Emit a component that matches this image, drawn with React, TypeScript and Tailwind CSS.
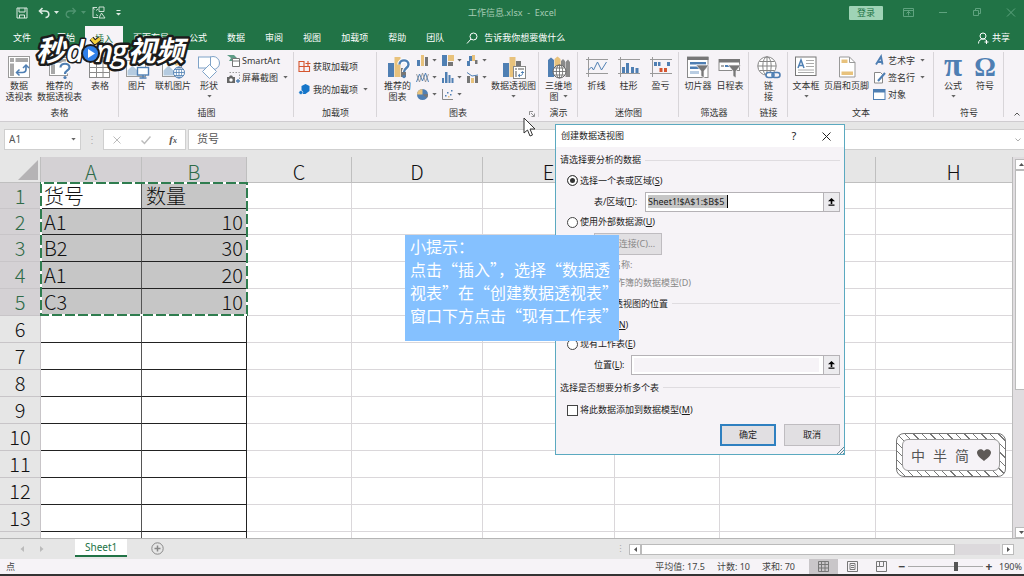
import type { ReactNode } from 'react';

const BLUE = '#4f7fb3';
const SAND = '#e8c27c';
const GRAY = '#767676';

const tabs = ['文件', '开始', '插入', '页面布局', '公式', '数据', '审阅', '视图', '加载项', '帮助', '团队'];

const columns = ['A', 'B', 'C', 'D', 'E', 'F', 'G', 'H'];

const rows: [string, string][] = [
  ['货号', '数量'],
  ['A1', '10'],
  ['B2', '30'],
  ['A1', '20'],
  ['C3', '10'],
  ['', ''],
  ['', ''],
  ['', ''],
  ['', ''],
  ['', ''],
  ['', ''],
  ['', ''],
  ['', ''],
  ['', ''],
];

function Icon({ children }: { children: ReactNode }) {
  return (
    <svg viewBox="0 0 24 24" className="size-6 shrink-0 overflow-visible" fill="none" aria-hidden="true">
      {children}
    </svg>
  );
}

function SmallIcon({ children }: { children: ReactNode }) {
  return (
    <svg viewBox="0 0 13 13" className="size-[13px] shrink-0" fill="none" aria-hidden="true">
      {children}
    </svg>
  );
}

function Caret() {
  return (
    <svg viewBox="0 0 5 3" className="h-[3px] w-[5px] shrink-0" aria-hidden="true">
      <path d="M0.3 0h4.4L2.5 2.6z" fill="#666" />
    </svg>
  );
}

function PivotIcon() {
  return (
    <Icon>
      <rect x="1.5" y="0.5" width="21" height="21" fill="#fff" stroke="#9a9a9a" />
      <path d="M3 2h4v4H3zM8.500 2h12.500v4H8.500zM3 7.500h4V20H3z" fill="#a8a8a8" />
      <path d="M10 16.500h5.500c2.500 0 3.500-1.500 3.500-3.500V10" stroke={BLUE} strokeWidth="1.700" />
      <path d="M12.500 13.500l-3 3 3 3M16 12l3-3 3 3" stroke={BLUE} strokeWidth="1.500" />
    </Icon>
  );
}

function PivotHelpIcon() {
  return (
    <Icon>
      <rect x="1.500" y="1.500" width="18" height="18" fill="#fff" stroke="#9a9a9a" />
      <path d="M3 3h4v4H3zM8.500 3H18v4H8.500zM3 8.500h4V18H3z" fill="#a8a8a8" />
      <path d="M12.500 11.500c0-5 9-5 9 0 0 3-4.500 3-4.500 6.500" stroke="#fff" strokeWidth="4.500" />
      <path d="M12.500 11.500c0-5 9-5 9 0 0 3-4.500 3-4.500 6.500" stroke={BLUE} strokeWidth="2.200" />
      <circle cx="17" cy="21.500" r="1.600" fill={BLUE} />
    </Icon>
  );
}

function TableIcon() {
  return (
    <Icon>
      <rect x="1.500" y="1.500" width="20" height="20" fill="#fff" stroke="#8a8a8a" />
      <path d="M1 2h21v4H1z" fill="#8a8a8a" />
      <path d="M1.500 11.500h20M1.500 16.500h20M8.500 6v15M15 6v15" stroke="#8a8a8a" />
    </Icon>
  );
}

function PictureIcon({ online = false }: { online?: boolean }) {
  return (
    <Icon>
      <rect x="1.500" y="4.500" width="19" height="16" fill="#fff" stroke="#9a9a9a" />
      <path d="M2.500 19.500v-5l5-5 5 5 2.500-2 4.500 3v4z" fill="#b5cbe0" />
      <circle cx="15.500" cy="8" r="1.700" fill={SAND} />
      {online ? (
        <>
          <circle cx="18" cy="16.500" r="5.500" fill="#fff" stroke={BLUE} />
          <path d="M12.500 16.500h11M18 11v11M14 13.500h8M14 19.500h8" stroke={BLUE} strokeWidth="0.800" />
          <ellipse cx="18" cy="16.500" rx="2.700" ry="5.500" stroke={BLUE} strokeWidth="0.800" />
        </>
      ) : (
        <>
          <rect x="12.500" y="11.500" width="11" height="7.500" fill="#fff" stroke={BLUE} strokeWidth="1.400" />
          <path d="M18 19v2.500M14.500 22h7" stroke={BLUE} strokeWidth="1.300" />
        </>
      )}
    </Icon>
  );
}

function ShapesIcon() {
  return (
    <Icon>
      <circle cx="16" cy="7" r="6.500" fill="#fff" stroke="#7fa3c8" />
      <rect x="1.500" y="1" width="12" height="11" fill="#fff" stroke="#7fa3c8" />
      <path d="M12.500 8.500l7 7-7 7-7-7z" fill="#fff" stroke="#7fa3c8" />
    </Icon>
  );
}

function ChartHelpIcon() {
  return (
    <Icon>
      <path d="M2 7h6v14H2z" fill={BLUE} />
      <path d="M8.500 1h6v20h-6z" fill={SAND} />
      <path d="M15 12h5v9h-5z" fill={GRAY} />
      <path d="M13.500 8.500c0-5.500 9-5.500 9 0 0 3.500-4.500 3.500-4.500 7.500" stroke="#fff" strokeWidth="4.500" />
      <path d="M13.500 8.500c0-5.500 9-5.500 9 0 0 3.500-4.500 3.500-4.500 7.500" stroke={BLUE} strokeWidth="2.400" />
      <circle cx="18" cy="20.500" r="1.700" fill={BLUE} />
    </Icon>
  );
}

function PivotChartIcon() {
  return (
    <Icon>
      <path d="M1 7h6v14H1z" fill={BLUE} />
      <path d="M7.500 1h6v20h-6z" fill={SAND} />
      <path d="M14 5h5v7h-5z" fill={GRAY} />
      <rect x="11.500" y="10.500" width="12" height="12" fill="#fff" stroke="#888" />
      <path d="M13 12h2v2h-2zM16 12h6v2h-6zM13 15h2v6h-2z" fill="#aaa" />
      <path d="M16.500 19.500h2c1.500 0 2-.8 2-2V16M18 18l-1.800 1.500L18 21M19 17l1.500-1.600L22 17" stroke={BLUE} />
    </Icon>
  );
}

function MapIcon() {
  return (
    <Icon>
      <path d="M1 4l3-2.500L7 4v17H1z" fill={BLUE} />
      <path d="M7.500 3l3-2.500 3 2.500v8h-6z" fill={SAND} />
      <path d="M14 5l2-2 2 2v8h-4zM18.500 6l2.500-2.500L23 6v15h-4.500z" fill="#8a8a8a" />
      <circle cx="12.500" cy="15.500" r="6.500" fill="#fff" stroke="#666" />
      <path d="M6 15.500h13M12.500 9v13M7.500 12h10M7.500 19h10" stroke="#666" strokeWidth="0.800" />
      <ellipse cx="12.500" cy="15.500" rx="3.200" ry="6.500" stroke="#666" strokeWidth="0.800" />
    </Icon>
  );
}

function Spark({ children }: { children: ReactNode }) {
  return (
    <Icon>
      <path d="M1 3.500h22M1 17.500h22M3.500 1v20" stroke="#9a9a9a" />
      {children}
    </Icon>
  );
}

function Funnel() {
  return <path d="M10 9h13l-5 6v7l-3-2v-5z" fill="#777" stroke="#f6f3f7" strokeWidth="0.700" />;
}

function SlicerIcon() {
  return (
    <Icon>
      <rect x="1.500" y="1" width="20.500" height="20.500" fill="#fff" stroke="#8a8a8a" />
      <path d="M1 1h21.500v3H1z" fill="#777" />
      <path d="M4 6h16v2.500H4z" fill={BLUE} />
      <path d="M4 10.500h16V13H4z" fill={BLUE} />
      <path d="M4 15h9v3H4z" fill="#b9cde2" />
      <Funnel />
    </Icon>
  );
}

function TimelineIcon() {
  return (
    <Icon>
      <rect x="1" y="3.500" width="20.500" height="11" fill="#fff" stroke="#8a8a8a" />
      <path d="M1 3h21v3.500H1z" fill="#777" />
      <path d="M3 9h3v2H3zM13 9h3v2h-3zM17 9h3v2h-3z" fill="#aaa" />
      <path d="M7 9h6v2H7z" fill={BLUE} />
      <Funnel />
    </Icon>
  );
}

function LinkIcon() {
  return (
    <Icon>
      <circle cx="10" cy="10" r="9.200" fill="#fff" stroke="#858585" />
      <ellipse cx="10" cy="10" rx="4.200" ry="9.200" stroke="#858585" />
      <path d="M1 10h18M10 1v18M2.500 5.500h15M2.500 14.500h15" stroke="#858585" />
      <rect x="9" y="16.500" width="8" height="5" rx="2.500" fill="#fff" stroke={BLUE} strokeWidth="1.600" />
      <rect x="15" y="16.500" width="8" height="5" rx="2.500" stroke={BLUE} strokeWidth="1.600" />
    </Icon>
  );
}

function TextBoxIcon() {
  return (
    <Icon>
      <rect x="1.500" y="1" width="20.500" height="18.500" fill="#fff" stroke="#777" />
      <path d="M4 12l3-8 3 8M5 9.500h4" stroke={BLUE} strokeWidth="1.500" />
      <path d="M12 4.500h8M12 7.500h8M12 10.500h8M4 14h16M4 16.500h16" stroke="#aaa" />
    </Icon>
  );
}

function HeaderFooterIcon() {
  return (
    <Icon>
      <path d="M4.500 1h10l5.500 5.500V21H4.500z" fill="#fff" stroke="#999" />
      <path d="M14.500 1v5.500H20" stroke="#999" />
      <path d="M6.500 3.500h6V7h-6zM6.500 15.500h11.500V19H6.500z" fill={SAND} />
    </Icon>
  );
}

function SymbolIcon({ symbol, size }: { symbol: string; size: number }) {
  return (
    <Icon>
      <text
        x="12"
        y="20"
        fontSize={size}
        textAnchor="middle"
        fill={BLUE}
        className="font-['Liberation_Serif',serif] font-bold"
      >
        {symbol}
      </text>
    </Icon>
  );
}

type BigProps = { icon: ReactNode; lines: string[]; width?: string; caret?: boolean; inlineCaret?: boolean };

function BigButton({ icon, lines, width = 'w-9', caret, inlineCaret }: BigProps) {
  return (
    <button type="button" className={`flex shrink-0 flex-col items-center pt-1 ${width}`}>
      {icon}
      {lines.map((line, i) => (
        <span key={line} className="flex items-center gap-1 leading-[11px] whitespace-nowrap">
          {line}
          {inlineCaret && i === lines.length - 1 && <Caret />}
        </span>
      ))}
      {caret && (
        <span className="flex h-[11px] items-center">
          <Caret />
        </span>
      )}
    </button>
  );
}

function SmallButton({ icon, text, caret }: { icon: ReactNode; text: string; caret?: boolean }) {
  return (
    <button type="button" className="flex h-[17px] items-center gap-[2px] whitespace-nowrap">
      {icon}
      {text}
      {caret && (
        <span className="pl-[3px]">
          <Caret />
        </span>
      )}
    </button>
  );
}

function Group({ name, width, children }: { name: string; width: string; children: ReactNode }) {
  return (
    <section className={`relative flex shrink-0 flex-col ${width}`}>
      <div className="flex flex-1 items-start justify-center">{children}</div>
      <h2 className="text-center leading-3">{name}</h2>
      <span className="absolute top-0 right-0 bottom-[2px] w-px bg-[#d8d5d9]" />
    </section>
  );
}

const chartIcons: { label: string; art: ReactNode }[] = [
  {
    label: '柱形图',
    art: (
      <>
        <path d="M1 6h3v6H1z" fill={BLUE} />
        <path d="M5 1h3v11H5z" fill={SAND} />
        <path d="M9 3h3v9H9z" fill={GRAY} />
      </>
    ),
  },
  {
    label: '层次结构图',
    art: (
      <>
        <path d="M1 1h5v11H1z" fill={BLUE} />
        <path d="M7 1h6v6H7z" fill={SAND} />
        <path d="M7 8h5v4H7z" fill={GRAY} />
      </>
    ),
  },
  {
    label: '瀑布图',
    art: (
      <>
        <path d="M1 7h3v5H1zM3 2h3v5H3z" fill={BLUE} />
        <path d="M6 1h3v6H6z" fill={SAND} />
        <path d="M9 6h2.500v4H9z" fill={GRAY} />
      </>
    ),
  },
  {
    label: '折线图',
    art: (
      <>
        <path d="M0.500 11l3-8 3 7 3-8 3 9" stroke={BLUE} />
        <path d="M0.500 3l3 8 3-9 3 9 3-8" stroke="#8a8a8a" strokeWidth="0.800" />
      </>
    ),
  },
  {
    label: '统计图',
    art: <path d="M1 7h2v5H1zM4 1h2.500v11H4zM7.500 4h2v8h-2zM10.500 7h2v5h-2z" fill={BLUE} />,
  },
  {
    label: '组合图',
    art: (
      <>
        <path d="M1 5h3v7H1z" fill={GRAY} />
        <path d="M5 7h3v5H5z" fill={SAND} />
        <path d="M9 5h3v7H9z" fill={GRAY} />
        <path d="M1 1.500l5 3.500 6-1" stroke={BLUE} />
      </>
    ),
  },
  {
    label: '饼图',
    art: (
      <>
        <circle cx="6.500" cy="6.500" r="5.500" fill={BLUE} />
        <path d="M6.500 6.500V1a5.500 5.500 0 0 0-5.500 5.500z" fill={SAND} />
        <path d="M6.500 6.500L11 10a5.500 5.500 0 0 0 1-4z" fill={GRAY} />
      </>
    ),
  },
  {
    label: '散点图',
    art: (
      <>
        <path d="M1.500 1v10.500H12" stroke="#888" />
        <path d="M4 7h1.500v1.500H4zM6 4h1.500v1.500H6zM9 6h1.500v1.500H9zM10 2h1.500v1.500H10z" fill={BLUE} />
        <path d="M7 8h1.500v1.500H7z" fill={SAND} />
      </>
    ),
  },
];

function Ribbon() {
  return (
    <div className="relative flex h-[71px] shrink-0 bg-[#f6f3f7] py-[2px] text-[#333]">
      <Group name="表格" width="w-[119px]">
        <BigButton icon={<PivotIcon />} lines={['数据', '透视表']} />
        <BigButton icon={<PivotHelpIcon />} lines={['推荐的', '数据透视表']} width="w-[45px]" />
        <BigButton icon={<TableIcon />} lines={['表格']} />
      </Group>
      <Group name="插图" width="w-[175px]">
        <BigButton icon={<PictureIcon />} lines={['图片']} />
        <BigButton icon={<PictureIcon online />} lines={['联机图片']} />
        <BigButton icon={<ShapesIcon />} lines={['形状']} caret />
        <div className="flex flex-1 flex-col">
          <SmallButton
            text="SmartArt"
            icon={
              <SmallIcon>
                <path d="M0 1h7l3 3-3 3H2L4 4z" fill="#5f9c86" />
                <path d="M5.500 4.500h7v8h-7z" fill="#fff" stroke="#777" />
                <path d="M5.500 7h7" stroke="#777" />
              </SmallIcon>
            }
          />
          <SmallButton
            text="屏幕截图"
            caret
            icon={
              <SmallIcon>
                <path d="M2.500 1.500h10v7" stroke="#999" strokeDasharray="1.500 1.500" />
                <path d="M0 6h2l1-1.500h2L6 6h2v6H0z" fill="#666" />
                <circle cx="4" cy="9" r="1.700" fill="#fff" />
                <path d="M9 10h4M11 8v4" stroke={BLUE} strokeWidth="1.300" />
              </SmallIcon>
            }
          />
        </div>
      </Group>
      <Group name="加载项" width="w-[83px]">
        <div className="flex flex-1 flex-col gap-[6px] pt-[6px] pl-1">
          <SmallButton
            text="获取加载项"
            icon={
              <SmallIcon>
                <path d="M1 1.500h5v10H1zM6 6.500h5.500v5H1M1 6.500h5" stroke="#d5552f" strokeWidth="1.100" />
                <path d="M7.500 3.500h5M10 1v5" stroke="#d5552f" strokeWidth="1.100" />
              </SmallIcon>
            }
          />
          <SmallButton
            text="我的加载项"
            caret
            icon={
              <SmallIcon>
                <path d="M3.500 3l4-2 4 2v5l-4 3h-3l-1-2z" fill="#1575c9" />
                <circle cx="2.800" cy="9.500" r="2" fill="#1575c9" stroke="#fff" strokeWidth="0.600" />
              </SmallIcon>
            }
          />
        </div>
      </Group>
      <Group name="图表" width="w-[162px]">
        <BigButton icon={<ChartHelpIcon />} lines={['推荐的', '图表']} />
        <div className="grid h-[51px] w-[75px] grid-cols-3">
          {chartIcons.map(({ label, art }) => (
            <button key={label} type="button" aria-label={label} className="flex h-[17px] items-center gap-[3px]">
              <SmallIcon>{art}</SmallIcon>
              <Caret />
            </button>
          ))}
        </div>
        <BigButton icon={<PivotChartIcon />} lines={['数据透视图']} width="w-[46px]" caret />
        <svg viewBox="0 0 6 6" className="absolute right-1 bottom-[2px] size-[6px]" fill="none">
          <path d="M0.500 4V0.500H4M2 2l3 3M5.500 2.500v3h-3" stroke="#777" strokeWidth="0.800" />
        </svg>
      </Group>
      <Group name="演示" width="w-[39px]">
        <BigButton icon={<MapIcon />} lines={['三维地', '图']} inlineCaret />
      </Group>
      <Group name="迷你图" width="w-[101px]">
        <BigButton
          icon={
            <Spark>
              <path d="M3.500 14l3-3 2 3 4-8 4 8 5-8" stroke={BLUE} />
            </Spark>
          }
          lines={['折线']}
          width="w-8"
        />
        <BigButton
          icon={
            <Spark>
              <path d="M5 11h3v6H5zM9 7h3v10H9zM14 11h3v6h-3zM18.500 12h3v5h-3z" fill={BLUE} />
            </Spark>
          }
          lines={['柱形']}
          width="w-8"
        />
        <BigButton
          icon={
            <Spark>
              <path d="M5 6h3v4H5zM9 6h2.500v4H9zM18 6h3v4h-3z" fill={BLUE} />
              <path d="M10.500 12h3v4h-3zM15 12h3v4h-3z" fill="#d5552f" />
            </Spark>
          }
          lines={['盈亏']}
          width="w-8"
        />
      </Group>
      <Group name="筛选器" width="w-[70px]">
        <BigButton icon={<SlicerIcon />} lines={['切片器']} width="w-8" />
        <BigButton icon={<TimelineIcon />} lines={['日程表']} width="w-8" />
      </Group>
      <Group name="链接" width="w-[39px]">
        <BigButton icon={<LinkIcon />} lines={['链', '接']} />
      </Group>
      <Group name="文本" width="w-[146px]">
        <BigButton icon={<TextBoxIcon />} lines={['文本框']} caret />
        <BigButton icon={<HeaderFooterIcon />} lines={['页眉和页脚']} width="w-[45px]" />
        <div className="flex flex-1 flex-col pl-1">
          <SmallButton
            text="艺术字"
            caret
            icon={
              <SmallIcon>
                <path d="M3 10.500l5-8 1.500 8M4.500 8h5" stroke={BLUE} strokeWidth="1.900" />
              </SmallIcon>
            }
          />
          <SmallButton
            text="签名行"
            caret
            icon={
              <SmallIcon>
                <path d="M1.500 1.500h6l2 2v8.500h-8z" fill="#fff" stroke="#888" />
                <path d="M12 2L5 10" stroke={BLUE} strokeWidth="2" />
              </SmallIcon>
            }
          />
          <SmallButton
            text="对象"
            icon={
              <SmallIcon>
                <rect x="0.500" y="1.500" width="11.500" height="10" fill="#fff" stroke={BLUE} />
                <path d="M0.500 1.500H12v3H0.500z" fill={BLUE} />
              </SmallIcon>
            }
          />
        </div>
      </Group>
      <Group name="符号" width="w-[70px]">
        <BigButton icon={<SymbolIcon symbol="π" size={33} />} lines={['公式']} width="w-8" caret />
        <BigButton icon={<SymbolIcon symbol="Ω" size={27} />} lines={['符号']} width="w-8" />
      </Group>
      <button type="button" aria-label="折叠功能区" className="ml-auto self-end pr-1 pb-[3px]">
        <svg viewBox="0 0 6 4" className="h-1 w-[6px]" fill="none">
          <path d="M0.500 3.500L3 1l2.500 2.500" stroke="#555" />
        </svg>
      </button>
    </div>
  );
}

function TitleBar() {
  return (
    <header className="grid h-[25px] shrink-0 grid-cols-3 items-center text-[9px] text-[#a5cbb4]">
      <div className="flex items-center gap-[6px] pl-4 text-[#dcebe2]">
        <svg viewBox="0 0 12 12" className="mr-1 size-3" fill="none" stroke="currentColor">
          <path d="M1 1h10v10H1zM3 1v4h6V1M3.500 11V8h5v3" />
        </svg>
        <div className="flex items-center gap-1">
          <svg viewBox="0 0 12 12" className="size-3" fill="none" stroke="currentColor" strokeWidth="1.600">
            <path d="M4.500 1L1.500 4l3 3M1.500 4h5.500c5 0 5 6.500 0.500 6.500" />
          </svg>
          <svg viewBox="0 0 5 3" className="h-[3px] w-[5px]">
            <path d="M0 0h5L2.500 3z" fill="currentColor" />
          </svg>
        </div>
        <div className="flex items-center gap-1 text-[#4f9470]">
          <svg viewBox="0 0 12 12" className="size-3" fill="none" stroke="currentColor" strokeWidth="1.300">
            <path d="M7.500 1l3 3-3 3M10.500 4H5c-5 0-5 6.500-0.500 6.500" />
          </svg>
          <svg viewBox="0 0 5 3" className="h-[3px] w-[5px]">
            <path d="M0 0h5L2.500 3z" fill="currentColor" />
          </svg>
        </div>
        <svg viewBox="0 0 14 13" className="h-[13px] w-[14px]" fill="none" stroke="currentColor" strokeWidth="0.900">
          <path d="M5 1.500H1v10h5M1 1.500l1.500 2M7 1h5v4.500H7zM4 4.500L6 3M4 8.500l2 1.500M7 12l2.500-5L13 12z" />
        </svg>
        <svg viewBox="0 0 5 6" className="ml-1 h-[6px] w-[5px]">
          <path d="M0.500 0h4v1h-4zM0 3h5L2.500 5.500z" fill="currentColor" />
        </svg>
      </div>
      <h1 className="text-center whitespace-pre">工作信息.xlsx  -  Excel</h1>
      <div className="flex items-center justify-end gap-6 pr-2 text-[#5fa37f]">
        <button type="button" className="-mr-1 h-[14px] rounded-[1px] bg-[#9fd3b6] px-2 leading-[14px] text-[#217346]">
          登录
        </button>
        <svg viewBox="0 0 11 9" className="h-[9px] w-[11px]" fill="none" stroke="currentColor">
          <path d="M0.500 0.500h10v8H0.500zM0.500 2.500h10M5.500 7.500v-4M3.500 5.500l2-2 2 2" />
        </svg>
        <svg viewBox="0 0 10 9" className="h-[9px] w-[10px]" fill="none" stroke="currentColor">
          <path d="M1 4.500h8" />
        </svg>
        <svg viewBox="0 0 10 9" className="h-[9px] w-[10px]" fill="none" stroke="currentColor">
          <path d="M1.500 2.500h5v5h-5zM3.500 2V0.500h5v5H7" />
        </svg>
        <svg viewBox="0 0 10 9" className="h-[9px] w-[10px]" fill="none" stroke="currentColor">
          <path d="M1 0.500l8 8M9 0.500l-8 8" />
        </svg>
      </div>
    </header>
  );
}

function TabBar() {
  return (
    <nav className="flex h-[25px] shrink-0 pl-[3px] text-white">
      {tabs.map((tab) => (
        <a
          key={tab}
          href={`#${tab}`}
          className={`px-[10px] leading-[25px] whitespace-nowrap first:mr-[6px] ${tab === '插入' ? 'mt-px bg-[#f6f3f7] text-[#217346]' : ''}`}
        >
          {tab}
        </a>
      ))}
      <button type="button" className="flex items-center gap-[6px] pl-3 whitespace-nowrap">
        <svg viewBox="0 0 12 12" className="size-3" fill="none" stroke="currentColor">
          <circle cx="7.500" cy="4.500" r="3.500" />
          <path d="M5 7l-4 4.500" />
        </svg>
        告诉我你想要做什么
      </button>
      <button type="button" className="ml-auto flex items-center gap-[3px] pr-[14px]">
        <svg viewBox="0 0 12 12" className="size-3" fill="none" stroke="currentColor">
          <circle cx="6" cy="4" r="3" />
          <path d="M1.500 11.500c0-3 2-4.500 4.500-4.500s3 1 3.500 2M7.500 10h4M9.500 8v4" />
        </svg>
        共享
      </button>
    </nav>
  );
}

function FormulaBar() {
  return (
    <div className="flex h-9 shrink-0 items-start border-t border-[#cfccd0] bg-[#e6e6e6] pt-[7px] text-[#555]">
      <div className="ml-1 flex h-[21px] w-[77px] items-center border border-[#cfcfcf] bg-white pr-1 pl-1">
        <input aria-label="名称框" defaultValue="A1" className="w-full min-w-0 bg-transparent text-[10px] outline-none" />
        <Caret />
      </div>
      <span className="w-[22px] text-center text-[10px] leading-[21px] text-[#aaa]">⋮</span>
      <div className="flex h-[21px] w-[83px] items-center justify-between border border-[#cfcfcf] bg-white px-2">
        <button type="button" aria-label="取消输入">
          <svg viewBox="0 0 10 10" className="size-[10px]" fill="none" stroke="#bbb">
            <path d="M1.500 1.500l7 7M8.500 1.500l-7 7" />
          </svg>
        </button>
        <button type="button" aria-label="输入">
          <svg viewBox="0 0 10 10" className="size-[10px]" fill="none" stroke="#bbb" strokeWidth="1.500">
            <path d="M0.500 5.500L3.500 8.500l6-7" />
          </svg>
        </button>
        <button type="button" className="font-['Liberation_Serif',serif] text-[11px] leading-3 font-bold italic">
          f<span className="text-[8px]">x</span>
        </button>
      </div>
      <div className="ml-[2px] flex h-[21px] flex-1 items-center border border-r-0 border-[#cfcfcf] bg-white pr-[3px] pl-2">
        <input aria-label="编辑栏" defaultValue="货号" className="w-full min-w-0 bg-transparent text-[11px] outline-none" />
        <svg viewBox="0 0 6 4" className="h-1 w-[6px]" fill="none" stroke="#aaa">
          <path d="M0.500 0.500L3 3l2.500-2.500" />
        </svg>
      </div>
    </div>
  );
}

function Sheet() {
  return (
    <div className="relative min-w-0 flex-1 overflow-hidden bg-white font-['Noto_Sans_CJK_SC',sans-serif]">
      <table className="w-[calc(100%+20px)] table-fixed border-separate border-spacing-0 text-[20px] leading-6 font-light text-[#111]">
        <colgroup>
          <col className="w-[41px]" />
          <col className="w-[101px]" />
          <col className="w-[105px]" />
          <col className="w-[105px]" />
          <col className="w-[131px]" />
          <col className="w-[132px]" />
          <col className="w-[105px]" />
          <col className="w-[156px]" />
          <col />
        </colgroup>
        <thead>
          <tr className="h-[26px] bg-[#e6e6e6]">
            <th className="border-r border-b border-[#bfbfbf] p-0">
              <svg viewBox="0 0 20 20" className="mr-[2px] ml-auto size-5">
                <path d="M20 0v20H0z" fill="#b5b3b5" />
              </svg>
            </th>
            {columns.map((c, i) => (
              <th
                key={c}
                className={`border-r border-b border-[#bfbfbf] p-0 pt-1 leading-[21px] font-light ${i < 2 ? 'bg-[#d4d1d4] text-[#2f6b48]' : ''}`}
              >
                {c}
              </th>
            ))}
          </tr>
        </thead>
        <tbody>
          {rows.map(([a, b], i) => {
            const picked = i < 5;
            return (
              <tr key={i} className={i < 2 ? 'h-[26px]' : 'h-[27px]'}>
                <th
                  className={`border-r border-b border-[#c8c5c8] p-0 font-light ${picked ? 'bg-[#d4d1d4] text-[#2f6b48]' : 'bg-[#e6e6e6]'}`}
                >
                  {i < 13 ? i + 1 : ''}
                </th>
                <td
                  className={`border-r border-b border-r-[#555] border-b-[#222] p-0 pl-[3px] ${picked && i > 0 ? 'bg-[#c6c6c6]' : ''}`}
                >
                  {a}
                </td>
                <td
                  className={`border-r border-b border-[#222] p-0 ${picked ? 'bg-[#c6c6c6]' : ''} ${i === 0 ? 'pl-1' : 'pr-[3px] text-right'}`}
                >
                  {b}
                </td>
                {columns.slice(2).map((c) => (
                  <td key={c} className="border-r border-b border-[#dad7da] p-0" />
                ))}
              </tr>
            );
          })}
        </tbody>
      </table>
      <svg className="absolute top-[25px] left-10 h-[135px] w-[208px]" fill="none" aria-hidden="true">
        <rect x="1" y="1" width="206" height="132" stroke="#2f7d4f" strokeWidth="2" />
        <rect x="1" y="1" width="206" height="132" stroke="#fff" strokeWidth="2" strokeDasharray="3 10" />
      </svg>
    </div>
  );
}

function ScrollArrow({ d, label }: { d: string; label: string }) {
  return (
    <button type="button" aria-label={label} className="flex h-[11px] w-3 shrink-0 items-center justify-center border border-[#bbb] bg-white">
      <svg viewBox="0 0 5 5" className="size-[5px]">
        <path d={d} fill="#555" />
      </svg>
    </button>
  );
}

function VerticalScroll() {
  return (
    <div className="flex w-3 shrink-0 flex-col overflow-hidden border-l border-[#bbb] bg-[#e0dde0] pt-[2px] pl-[2px]">
      <ScrollArrow label="向上滚动" d="M0 4h5L2.500 1z" />
      <div className="h-[220px] w-3 border border-[#bbb] bg-white" />
      <div className="flex-1" />
      <ScrollArrow label="向下滚动" d="M0 1h5L2.500 4z" />
    </div>
  );
}

function SheetTabs() {
  return (
    <div className="flex h-[21px] shrink-0 items-start border-t border-[#b5b5b5] bg-[#e6e6e6]">
      <div className="flex h-5 w-[75px] items-center gap-4 pl-5">
        <svg viewBox="0 0 4 6" className="h-[6px] w-1">
          <path d="M4 0v6L0.500 3z" fill="#bbb" />
        </svg>
        <svg viewBox="0 0 4 6" className="h-[6px] w-1">
          <path d="M0 0v6l3.500-3z" fill="#bbb" />
        </svg>
      </div>
      <button type="button" className="h-[18px] border-b-2 border-[#217346] bg-white px-[10px] text-[10px] leading-4 text-[#217346]">
        Sheet1
      </button>
      <button type="button" aria-label="新工作表" className="ml-6 pt-[3px]">
        <svg viewBox="0 0 13 13" className="size-[13px]" fill="none" stroke="#888">
          <circle cx="6.500" cy="6.500" r="5.700" />
          <path d="M3.500 6.500h6M6.500 3.500v6" strokeWidth="1.500" />
        </svg>
      </button>
      <div className="ml-auto flex h-5 w-[413px] items-center pr-[10px]">
        <span className="w-[18px] shrink-0 text-center text-[9px] text-[#aaa]">⋮</span>
        <ScrollArrow label="向左滚动" d="M4 0v5L1 2.500z" />
        <div className="h-[11px] flex-1 border border-[#bbb] bg-white" />
        <div className="mr-[2px] h-[11px] w-[45px] bg-[#dcd9dc]" />
        <ScrollArrow label="向右滚动" d="M1 0v5l3-2.500z" />
      </div>
    </div>
  );
}

function StatusBar() {
  return (
    <footer className="flex h-[17px] shrink-0 items-center border-b-2 border-[#333] bg-[#f6f3f7] pl-[6px] text-[#444]">
      <span>点</span>
      <div className="ml-auto flex gap-3 pr-[14px] whitespace-nowrap">
        <span>平均值: 17.5</span>
        <span>计数: 10</span>
        <span>求和: 70</span>
      </div>
      <button type="button" aria-label="普通" className="flex h-full w-[29px] items-center justify-center bg-[#c9c6c9]">
        <svg viewBox="0 0 11 11" className="size-[11px]" fill="none" stroke="#777">
          <path d="M0.500 0.500h10v10H0.500zM0.500 3.500h10M0.500 7h10M3.500 0.500v10M7 0.500v10" />
        </svg>
      </button>
      <button type="button" aria-label="页面布局" className="flex w-[29px] justify-center">
        <svg viewBox="0 0 11 11" className="size-[11px]" fill="none" stroke="#777">
          <path d="M0.500 0.500h10v10H0.500zM3 2.500h5v6H3zM4 4.500h3M4 6.500h3" />
        </svg>
      </button>
      <button type="button" aria-label="分页预览" className="flex w-[29px] justify-center">
        <svg viewBox="0 0 11 11" className="size-[11px]" fill="none" stroke="#777">
          <path d="M0.500 0.500h10v10H0.500zM3.500 0.500v5h4v-5M0.500 5.500h3" />
        </svg>
      </button>
      <button type="button" aria-label="缩小" className="w-3 text-center text-[12px] leading-3 font-bold">
        −
      </button>
      <input
        type="range"
        aria-label="显示比例"
        min="10"
        max="400"
        defaultValue="260"
        className="h-[11px] w-[75px] appearance-none bg-[linear-gradient(#aaa,#aaa)] bg-[length:100%_1px] bg-center bg-no-repeat [&::-webkit-slider-thumb]:h-[9px] [&::-webkit-slider-thumb]:w-1 [&::-webkit-slider-thumb]:appearance-none [&::-webkit-slider-thumb]:bg-[#555]"
      />
      <button type="button" aria-label="放大" className="w-3 text-center text-[12px] leading-3 font-bold">
        +
      </button>
      <span className="w-[29px] pr-[2px] text-right">190%</span>
    </footer>
  );
}

function Section({ children, height }: { children: ReactNode; height: string }) {
  return (
    <h3 className={`flex items-center gap-1 whitespace-nowrap ${height}`}>
      {children}
      <span className="h-px flex-1 bg-[#dfdce0]" />
    </h3>
  );
}

const radioClass =
  'size-[11px] shrink-0 appearance-none rounded-full border border-[#444] bg-white checked:bg-[#333] checked:shadow-[inset_0_0_0_2px_white]';

const optionClass = 'flex items-center gap-[2px] pl-[7px]';

const boxClass = 'flex h-5 items-center border border-[#b5b2b6] bg-white';

function RangeButton() {
  return (
    <button type="button" aria-label="折叠对话框" className="flex h-full w-4 shrink-0 items-center justify-center border-l border-[#b5b2b6] bg-[#ecebee]">
      <svg viewBox="0 0 7 8" className="h-2 w-[7px]">
        <path d="M3.500 0L7 3.200H4.300V6H2.700V3.200H0zM0.500 6.500h6v1.300h-6z" fill="#000" />
      </svg>
    </button>
  );
}

function PivotDialog() {
  return (
    <div
      role="dialog"
      aria-label="创建数据透视图"
      className="absolute top-[124px] left-[555px] w-[290px] border border-[#5ba9c0] bg-[#f6f3f7] text-[#1c1c1c]"
    >
      <div className="flex h-[22px] items-center bg-white pl-[5px]">
        <h2 className="flex-1">创建数据透视图</h2>
        <button type="button" aria-label="帮助" className="w-3 text-[11px]">
          ?
        </button>
        <button type="button" aria-label="关闭" className="mr-[13px] ml-[22px]">
          <svg viewBox="0 0 9 9" className="size-[9px]" fill="none" stroke="#222">
            <path d="M0.500 0.500l8 8M8.500 0.500l-8 8" />
          </svg>
        </button>
      </div>
      <form className="px-1 pt-[3px] pb-2">
        <Section height="h-5">请选择要分析的数据</Section>
        <label className={`h-[21px] ${optionClass}`}>
          <input type="radio" name="source" defaultChecked className={radioClass} />
          <span>
            选择一个表或区域(<u>S</u>)
          </span>
        </label>
        <div className="flex h-[21px] items-center justify-between pl-[34px]">
          <label htmlFor="range">
            表/区域(<u>T</u>):
          </label>
          <div className={`${boxClass} w-[195px]`}>
            <div className="flex-1 pl-[2px]">
              <input
                id="range"
                defaultValue="Sheet1!$A$1:$B$5"
                className="w-20 border-r border-black bg-[#c6c6c6] text-[9px] leading-[13px] outline-none"
              />
            </div>
            <RangeButton />
          </div>
        </div>
        <label className={`h-5 ${optionClass}`}>
          <input type="radio" name="source" className={radioClass} />
          <span>
            使用外部数据源(<u>U</u>)
          </span>
        </label>
        <div className="flex h-6 items-center pl-[34px] text-[#888]">
          <button type="button" disabled className="h-[22px] w-[68px] border border-[#bfbcc0] bg-[#e1dfe2]">
            选择连接(C)...
          </button>
        </div>
        <p className="pl-[34px] leading-[18px] text-[#888]">连接名称:</p>
        <label className={`h-[17px] text-[#888] ${optionClass}`}>
          <input type="radio" name="source" disabled className={radioClass} />
          <span>使用此工作簿的数据模型(D)</span>
        </label>
        <Section height="h-[25px]">选择放置数据透视图的位置</Section>
        <label className={`h-[18px] ${optionClass}`}>
          <input type="radio" name="place" defaultChecked className={radioClass} />
          <span>
            新工作表(<u>N</u>)
          </span>
        </label>
        <label className={`h-5 ${optionClass}`}>
          <input type="radio" name="place" className={radioClass} />
          <span>
            现有工作表(<u>E</u>)
          </span>
        </label>
        <div className="flex h-[21px] items-center justify-between pl-[34px]">
          <label htmlFor="place">
            位置(<u>L</u>):
          </label>
          <div className={`${boxClass} w-[209px]`}>
            <input id="place" className="mx-[2px] mr-1 h-[14px] min-w-0 flex-1 bg-[#f6f3f7] outline-none" />
            <RangeButton />
          </div>
        </div>
        <Section height="h-[25px]">选择是否想要分析多个表</Section>
        <label className={`h-5 ${optionClass}`}>
          <input type="checkbox" className="size-[11px] appearance-none border border-[#444] bg-white" />
          <span>
            将此数据添加到数据模型(<u>M</u>)
          </span>
        </label>
        <div className="flex justify-end gap-2 pt-1">
          <button type="button" className="h-[22px] w-14 border-2 border-[#2f80c0] bg-[#e1dfe2]">
            确定
          </button>
          <button type="button" className="h-[22px] w-14 border border-[#bfbcc0] bg-[#e1dfe2]">
            取消
          </button>
        </div>
      </form>
      <svg viewBox="0 0 8 8" className="absolute right-0 bottom-0 size-2" stroke="#5f8795">
        <path d="M1 8l7-7M4 8l4-4M7 8l1-1" />
      </svg>
    </div>
  );
}

function Tip() {
  return (
    <aside className="absolute top-[235px] left-[405px] h-[106px] w-[214px] bg-[#85c1ff] pl-[5px] font-['Noto_Sans_CJK_SC',sans-serif] text-[16px] leading-[23px] whitespace-nowrap text-white">
      <p>小提示：</p>
      <p>
        点击“插入”，选择“数据透
        <br />
        视表”在“创建数据透视表”
        <br />
        窗口下方点击“现有工作表”
      </p>
    </aside>
  );
}

function Watermark() {
  return (
    <svg
      viewBox="0 0 156 42"
      className="absolute top-8 left-[34px] h-[42px] w-[156px] overflow-visible font-['Noto_Sans_CJK_SC',sans-serif] font-bold italic"
      fill="#fff"
      stroke="#1c1c1c"
      strokeWidth="5"
      strokeLinejoin="round"
      paintOrder="stroke"
    >
      <g className="font-['Open_Sans',sans-serif] font-semibold" fontSize="31">
        <text x="77" y="30">
          g
        </text>
        <text x="61" y="30">
          n
        </text>
      </g>
      <text x="2" y="29" fontSize="29">
        秒
      </text>
      <text x="94" y="29" fontSize="28">
        视频
      </text>
      <text x="32" y="30" fontSize="31" strokeWidth="3" className="font-['Open_Sans',sans-serif] font-semibold">
        d
      </text>
      <circle cx="56.500" cy="21.500" r="7.500" fill="#2f80ea" strokeWidth="4" />
      <path d="M54 17l7 4.500-7 4.500z" stroke="none" />
      <path d="M57.500 6.500l3.500 4 5-4" fill="none" stroke="#1c1c1c" strokeWidth="5" />
      <path d="M57.500 6.500l3.500 4 5-4" fill="none" stroke="#f7d23c" strokeWidth="3" />
    </svg>
  );
}

function ImeBadge() {
  return (
    <div className="absolute top-[433px] right-[18px] h-11 w-[110px] rounded-lg border border-[#777] bg-[repeating-linear-gradient(45deg,#fff_0_5px,#777_5px_6px)] p-[5px]">
      <div className="flex h-full items-center justify-center gap-2 rounded-md border border-[#999] bg-[#f6f3f7] text-[14px] text-[#555]">
        <span>中</span>
        <span>半</span>
        <span>简</span>
        <svg viewBox="0 0 14 12" className="h-3 w-[14px]">
          <path d="M7 12C3 9 0 6.500 0 3.600 0 0 5-1.200 7 2.200 9-1.200 14 0 14 3.600 14 6.500 11 9 7 12z" fill="#5e5a57" />
        </svg>
      </div>
    </div>
  );
}

export default function App() {
  return (
    <div className="relative flex h-screen flex-col overflow-hidden bg-[#217346] font-['Noto_Sans','Noto_Sans_CJK_SC',sans-serif] text-[9px]">
      <TitleBar />
      <TabBar />
      <Ribbon />
      <FormulaBar />
      <main className="flex min-h-0 flex-1">
        <Sheet />
        <VerticalScroll />
      </main>
      <SheetTabs />
      <StatusBar />
      <PivotDialog />
      <Tip />
      <Watermark />
      <ImeBadge />
      <svg viewBox="0 0 13 20" className="absolute top-[117px] left-[523px] h-5 w-[13px]">
        <path d="M1 1v15l3.500-3 2.500 6 2.500-1-2.500-6h5z" fill="#fff" stroke="#333" />
      </svg>
    </div>
  );
}
